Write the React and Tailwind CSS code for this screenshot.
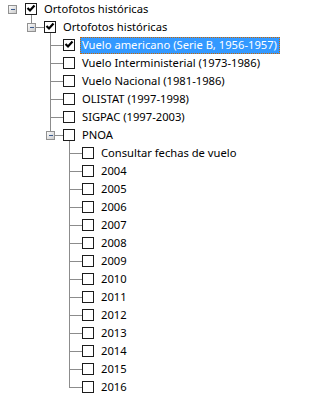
import React from 'react';

const rows = [
  { label: 'Ortofotos históricas', level: 0, checked: true, expander: true, root: true, hasKids: true },
  { label: 'Ortofotos históricas', level: 1, checked: true, expander: true, last: true, hasKids: true },
  { label: 'Vuelo americano (Serie B, 1956-1957)', level: 2, checked: true, selected: true },
  { label: 'Vuelo Interministerial (1973-1986)', level: 2 },
  { label: 'Vuelo Nacional (1981-1986)', level: 2 },
  { label: 'OLISTAT (1997-1998)', level: 2 },
  { label: 'SIGPAC (1997-2003)', level: 2 },
  { label: 'PNOA', level: 2, expander: true, last: true, hasKids: true },
  { label: 'Consultar fechas de vuelo', level: 3 },
  ...['2004', '2005', '2006', '2007', '2008', '2009', '2010', '2011', '2012', '2013', '2014', '2015', '2016'].map(
    (y, i, a) => ({ label: y, level: 3, last: i === a.length - 1 })
  ),
];

const LINE = '#8c8c8c';

// tree connectors, expander and checkbox for one row
function Guides({ row }) {
  const cx = 12 + 19 * row.level;
  const w = cx + 26;
  const x = cx + 0.5;
  const bx = cx + 13;
  return (
    <svg width={w} height={18} className="shrink-0 block">
      {!row.root && !row.expander && (
        <>
          <line x1={x} y1={0} x2={x} y2={row.last ? 9.5 : 18} stroke={LINE} />
          <line x1={cx} y1={9.5} x2={bx} y2={9.5} stroke={LINE} />
        </>
      )}
      {row.expander && (
        <>
          {!row.root && <line x1={x} y1={0} x2={x} y2={5} stroke={LINE} />}
          {!row.root && <line x1={cx + 5} y1={9.5} x2={bx} y2={9.5} stroke={LINE} />}
          <defs>
            <linearGradient id={`g${row.level}`} x1="0" y1="0" x2="1" y2="1">
              <stop offset="0" stopColor="#ffffff" />
              <stop offset="1" stopColor="#c8c8c8" />
            </linearGradient>
          </defs>
          <rect x={cx - 3.5} y={5.5} width={8} height={8} fill={`url(#g${row.level})`} stroke="#919191" />
          <line x1={cx - 1} y1={9.5} x2={cx + 3} y2={9.5} stroke="#3b5b8e" />
        </>
      )}
      {row.hasKids && <line x1={cx + 19.5} y1={15} x2={cx + 19.5} y2={18} stroke={LINE} />}
      <rect x={bx + 0.5} y={3.5} width={11} height={11} fill="#ffffff" stroke="#1c1c1c" />
      {row.checked && (
        <path
          d={`M${bx + 2.5} 8 L${bx + 5} 10.5 L${bx + 9.5} 5.5`}
          fill="none"
          stroke="#000000"
          strokeWidth={2.2}
        />
      )}
    </svg>
  );
}

function Row({ row }) {
  return (
    <div className="flex h-[18px] items-center">
      <Guides row={row} />
      {row.selected ? (
        <span className="ml-[4px] flex h-[17px] items-center border border-dotted border-[#cc6600] bg-[#3399ff] pl-[1px] pr-[2px] text-white">
          {row.label}
        </span>
      ) : (
        <span className="ml-[6px] text-black">{row.label}</span>
      )}
    </div>
  );
}

export default function App() {
  return (
    <div
      className="h-[395px] w-[321px] overflow-hidden bg-white text-[11.2px] leading-[18px]"
      style={{ fontFamily: '"Noto Sans", "Open Sans", sans-serif' }}
    >
      {rows.map((row, i) => (
        <Row key={i} row={row} />
      ))}
    </div>
  );
}
